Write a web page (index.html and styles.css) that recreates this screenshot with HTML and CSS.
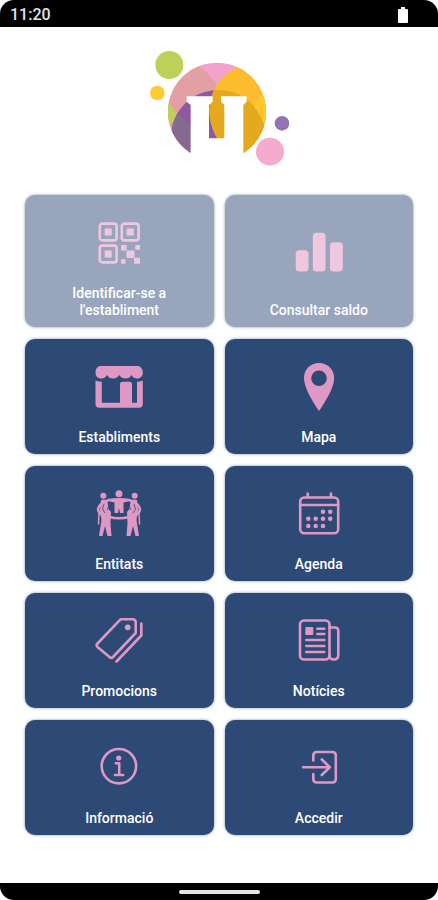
FILE: index.html
```html
<!DOCTYPE html>
<html lang="ca">
<head>
  <meta charset="UTF-8" />
  <meta name="viewport" content="width=device-width, initial-scale=1.0" />
  <title>Inici</title>
  <link rel="stylesheet" href="styles.css">
</head>
<body>

  <div class="phone">
    <header class="status-bar">
      <span class="clock">11:20</span>
      <svg class="battery" viewBox="0 0 10 16" aria-hidden="true">
        <path d="M3 0h4v2h2a1 1 0 0 1 1 1v12a1 1 0 0 1-1 1H1a1 1 0 0 1-1-1V3a1 1 0 0 1 1-1h2z"/>
      </svg>
    </header>

    <main class="home">
      <svg class="logo" viewBox="27 30 420 354" role="img" aria-label="Logotip">
        <defs>
          <clipPath id="disc"><circle cx="231" cy="215" r="147"/></clipPath>
          <clipPath id="lower"><circle cx="235" cy="292" r="142"/></clipPath>
        </defs>
        <circle cx="88" cy="75" r="42" fill="#bdd058"/>
        <circle cx="52" cy="159" r="22" fill="#fdcb35"/>
        <circle cx="426" cy="250" r="22" fill="#9473b5"/>
        <circle cx="390" cy="335" r="42" fill="#f3acce"/>
        <g clip-path="url(#disc)">
          <rect x="80" y="60" width="310" height="300" fill="#f2a3cb"/>
          <path d="M80 60H155Q205 95 240 145L220 260H80Z" fill="#e3a0a4"/>
          <path d="M80 160Q90 200 112 222L80 270Z" fill="#bdd058"/>
          <g clip-path="url(#lower)">
            <rect x="80" y="140" width="310" height="230" fill="#8c58a2"/>
            <path d="M80 180L112 212Q130 240 165 262V360H80Z" fill="#86698f"/>
          </g>
          <path d="M300 78C225 110 205 175 209 225Q213 265 235 300V370H390V60Z" fill="#fbbc2d"/>
          <g clip-path="url(#lower)">
            <path d="M232 130C208 175 205 220 212 245Q218 275 235 300V370H390V130Z" fill="#e4a91f"/>
          </g>
          <path d="M368 150Q362 178 342 200Q365 225 374 260L395 200Z" fill="#ffc72b"/>
        </g>
        <path d="M140 169H218V185L207 195V295H253V195L243 185V169H320V185L310 195V340L340 375H125L152 340V195L140 185Z" fill="#fff"/>
      </svg>

      <nav class="menu">
        <button class="tile" type="button" disabled>
          <svg class="icon" viewBox="0 0 48 48" aria-hidden="true">
            <g class="line">
              <rect x="4.8" y="4.6" width="16.8" height="16.8" rx="2.5"/>
              <rect x="26.8" y="4.6" width="16.8" height="16.8" rx="2.5"/>
              <rect x="4.8" y="26.6" width="16.8" height="16.8" rx="2.5"/>
            </g>
            <path d="M9.7 9.5h7v7h-7zM31.7 9.5h7v7h-7zM9.7 31.5h7v7h-7zM26 26h5.5v5.5H26zM40.3 26H45v4.7h-4.7zM31.5 31.5h8v7.5h-8zM26 40.3h4.5v4.5H26zM39 38.8h6v6h-6z"/>
          </svg>
          <span class="label">Identificar-se a l'establiment</span>
        </button>
        <button class="tile" type="button" disabled>
          <svg class="icon" viewBox="0 0 48 48" aria-hidden="true">
            <rect x="0.7" y="22.2" width="12.8" height="21.3" rx="3.5"/>
            <rect x="17.8" y="4.8" width="12.8" height="38.7" rx="3.5"/>
            <rect x="35" y="14.2" width="12.8" height="29.3" rx="3.5"/>
          </svg>
          <span class="label">Consultar saldo</span>
        </button>
        <a class="tile" href="#establiments">
          <svg class="icon" viewBox="0 0 48 48" aria-hidden="true">
            <path d="M5 3H43Q47.8 4 47.8 9.5C47.8 13.5 45 15.6 42 15.6Q38.5 15.6 36.5 12Q34.5 15.6 30.5 15.6Q26.5 15.6 24.2 12Q22 15.6 18 15.6Q14 15.6 12 12Q10 15.6 6.3 15.6C3 15.6 .5 13.5 .5 9.5Q.5 4 5 3Z"/>
            <path d="M.5 17.5Q3.500 19 6.800 18.500V39.700H25V21Q25 18.700 27.500 18.700H34.500Q37 18.700 37 21V39.700H42V18.500Q45 19 47.800 17.500V41Q47.800 44.800 44 44.800H4.500Q.5 44.800 .5 41Z"/>
          </svg>
          <span class="label">Establiments</span>
        </a>
        <a class="tile" href="#mapa">
          <svg class="icon" viewBox="0 0 48 48" aria-hidden="true">
            <path fill-rule="evenodd" d="M24 0C15.500 0 9 6.500 9 15C9 25 18 39 24 48C30 39 39.200 25 39.200 15C39.200 6.500 32.500 0 24 0ZM24 7.500A7.800 7.800 0 1 1 24 23.100A7.800 7.800 0 1 1 24 7.500Z"/>
          </svg>
          <span class="label">Mapa</span>
        </a>
        <a class="tile" href="#entitats">
          <svg class="icon" viewBox="0 0 48 48" aria-hidden="true">
            <circle cx="24" cy="3.700" r="3.500"/>
            <circle cx="8.300" cy="5.800" r="3"/>
            <circle cx="39.700" cy="5.800" r="3"/>
            <path d="M13 9Q24 7 35 9V11L28.500 12.500V23H25L24 18L23 23H19.500V12.500L13 11Z"/>
            <path d="M6 10Q10 8.500 12.500 11L13.500 19L16 22L15.500 33L16.500 46H12.500L10 36L7.500 46H4L6.500 30L5 20Z"/>
            <path d="M42 10Q38 8.500 35.500 11L34.500 19L32 22L32.500 33L31.500 46H35.500L38 36L40.500 46H44L41.500 30L43 20Z"/>
            <path class="line" d="M14 10Q5 12 3 19Q3 25 14 27Q24 29.500 34 27Q45 25 45 19Q43 12 34 10"/>
            <path class="line thin" d="M4 23L3.500 34M44 23L44.500 34"/>
            <path class="cut" d="M9 14L7.500 19L10 23M39 14L40.500 19L38 23M14 16L12 20M34 16L36 20"/>
          </svg>
          <span class="label">Entitats</span>
        </a>
        <a class="tile" href="#agenda">
          <svg class="icon" viewBox="0 0 48 48" aria-hidden="true">
            <g class="line">
              <rect x="5.200" y="7.500" width="38" height="35.800" rx="4"/>
              <path d="M5 15H43M12.700 3.500V7M36 3.500V7"/>
            </g>
            <circle cx="28" cy="21.700" r="2.300"/>
            <circle cx="35.200" cy="21.700" r="2.300"/>
            <circle cx="13.300" cy="28.800" r="2.300"/>
            <circle cx="20.700" cy="28.800" r="2.300"/>
            <circle cx="28" cy="28.800" r="2.300"/>
            <circle cx="35.200" cy="28.800" r="2.300"/>
            <circle cx="13.300" cy="36" r="2.300"/>
            <circle cx="20.700" cy="36" r="2.300"/>
            <circle cx="28" cy="36" r="2.300"/>
          </svg>
          <span class="label">Agenda</span>
        </a>
        <a class="tile" href="#promocions">
          <svg class="icon" viewBox="0 0 48 48" aria-hidden="true">
            <g class="line">
              <path d="M25.500 2.300H37.500Q40.700 2.300 40.700 5.500V16L18 40Q16.300 41.700 14.500 40L2.500 30Q.8 28.300 2.500 26.500Z"/>
              <path d="M46.300 6.500V18.500L21.500 44.500"/>
            </g>
            <circle cx="32.700" cy="10.300" r="2.900"/>
          </svg>
          <span class="label">Promocions</span>
        </a>
        <a class="tile" href="#noticies">
          <svg class="icon" viewBox="0 0 48 48" aria-hidden="true">
            <g class="line">
              <rect x="5" y="3.500" width="29.500" height="39" rx="4"/>
              <path d="M34.500 10.500H40Q43.300 10.500 43.300 14V38Q43.300 42.500 38.800 42.500Q34.500 42.500 34.500 38"/>
              <path d="M22.300 11.700H29.300M22.300 17H29.300M11.300 23H29.300M11.300 29H29.300M11.300 35H29.300"/>
            </g>
            <rect x="10.300" y="10" width="8" height="8" rx="1"/>
          </svg>
          <span class="label">Notícies</span>
        </a>
        <a class="tile" href="#informacio">
          <svg class="icon" viewBox="0 0 48 48" aria-hidden="true">
            <g class="line">
              <circle cx="23.900" cy="22.200" r="17.200"/>
              <path d="M20.800 19.300H24.200V31M20 31H28.200"/>
            </g>
            <circle cx="23.700" cy="14" r="2.600"/>
          </svg>
          <span class="label">Informació</span>
        </a>
        <a class="tile" href="#accedir">
          <svg class="icon" viewBox="0 0 48 48" aria-hidden="true">
            <g class="line">
              <path d="M18.300 16.500V11.500Q18.300 8 21.800 8H37.300Q40.800 8 40.800 11.500V35Q40.800 38.500 37.300 38.500H21.800Q18.300 38.500 18.300 35V30"/>
              <path d="M8 23.300H34.500M26.800 15.500L34.800 23.300L26.800 31"/>
            </g>
          </svg>
          <span class="label">Accedir</span>
        </a>
      </nav>
    </main>

    <footer class="gesture-bar">
      <div class="handle"></div>
    </footer>
  </div>

</body>
</html>
```
FILE: styles.css
```css
* {
  margin: 0;
  padding: 0;
  box-sizing: border-box;
}
body {
  font-family: Roboto, sans-serif;
  background: #fff;
}
.phone {
  display: flex;
  flex-direction: column;
  min-height: 100vh;
}
.status-bar {
  display: flex;
  align-items: center;
  justify-content: space-between;
  height: 27px;
  padding: 2px 30px 0 10px;
  background: #000;
  border-radius: 14px 14px 0 0;
}
.clock {
  color: #e4e4e4;
  font-size: 16px;
  font-weight: 500;
  line-height: 20px;
}
.battery {
  width: 10px;
  height: 16px;
  fill: #fff;
}
.home {
  flex: 1;
  display: flex;
  flex-direction: column;
  align-items: center;
  padding: 23px 25px;
}
.logo {
  width: 140px;
  height: 118px;
  margin-bottom: 27px;
}
.menu {
  display: grid;
  grid-template-columns: 1fr 1fr;
  gap: 12px 11px;
  width: 100%;
}
.tile {
  display: flex;
  flex-direction: column;
  align-items: center;
  padding: 24px 24px 8px;
  border: 0;
  border-radius: 10px;
  background: #2d4975;
  box-shadow: 0 0 3px rgba(45, 73, 117, 0.6);
  color: #fff;
  font-family: inherit;
  font-size: 14px;
  font-weight: 500;
  line-height: 17px;
  text-align: center;
  text-decoration: none;
}
.tile:disabled {
  background: #98a5bd;
}
.tile:disabled .icon {
  color: #efc7df;
}
.icon {
  width: 48px;
  height: 48px;
  margin: auto 0;
  color: #dd99c4;
  fill: currentColor;
}
.line {
  fill: none;
  stroke: currentColor;
  stroke-width: 2.6;
  stroke-linecap: round;
  stroke-linejoin: round;
}
.thin {
  stroke-width: 1.5;
}
.cut {
  fill: none;
  stroke: #2d4975;
  stroke-width: 0.8;
}
.label {
  max-width: 120px;
  margin-top: 18px;
}
.gesture-bar {
  display: flex;
  align-items: center;
  justify-content: center;
  height: 17px;
  background: #000;
  border-radius: 0 0 14px 14px;
}
.handle {
  width: 81px;
  height: 4px;
  border-radius: 2px;
  background: #e8e4e6;
}
```
